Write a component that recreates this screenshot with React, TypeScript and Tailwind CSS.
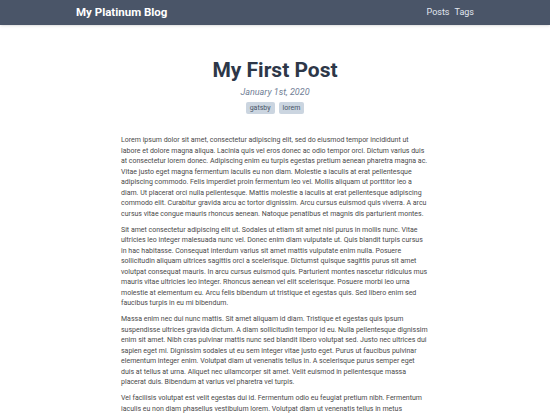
const paragraphs = [
  'Lorem ipsum dolor sit amet, consectetur adipiscing elit, sed do eiusmod tempor incididunt ut labore et dolore magna aliqua. Lacinia quis vel eros donec ac odio tempor orci. Dictum varius duis at consectetur lorem donec. Adipiscing enim eu turpis egestas pretium aenean pharetra magna ac. Vitae justo eget magna fermentum iaculis eu non diam. Molestie a iaculis at erat pellentesque adipiscing commodo. Felis imperdiet proin fermentum leo vel. Mollis aliquam ut porttitor leo a diam. Ut placerat orci nulla pellentesque. Mattis molestie a iaculis at erat pellentesque adipiscing commodo elit. Curabitur gravida arcu ac tortor dignissim. Arcu cursus euismod quis viverra. A arcu cursus vitae congue mauris rhoncus aenean. Natoque penatibus et magnis dis parturient montes.',
  'Sit amet consectetur adipiscing elit ut. Sodales ut etiam sit amet nisl purus in mollis nunc. Vitae ultricies leo integer malesuada nunc vel. Donec enim diam vulputate ut. Quis blandit turpis cursus in hac habitasse. Consequat interdum varius sit amet mattis vulputate enim nulla. Posuere sollicitudin aliquam ultrices sagittis orci a scelerisque. Dictumst quisque sagittis purus sit amet volutpat consequat mauris. In arcu cursus euismod quis. Parturient montes nascetur ridiculus mus mauris vitae ultricies leo integer. Rhoncus aenean vel elit scelerisque. Posuere morbi leo urna molestie at elementum eu. Arcu felis bibendum ut tristique et egestas quis. Sed libero enim sed faucibus turpis in eu mi bibendum.',
  'Massa enim nec dui nunc mattis. Sit amet aliquam id diam. Tristique et egestas quis ipsum suspendisse ultrices gravida dictum. A diam sollicitudin tempor id eu. Nulla pellentesque dignissim enim sit amet. Nibh cras pulvinar mattis nunc sed blandit libero volutpat sed. Justo nec ultrices dui sapien eget mi. Dignissim sodales ut eu sem integer vitae justo eget. Purus ut faucibus pulvinar elementum integer enim. Volutpat diam ut venenatis tellus in. A scelerisque purus semper eget duis at tellus at urna. Aliquet nec ullamcorper sit amet. Velit euismod in pellentesque massa placerat duis. Bibendum at varius vel pharetra vel turpis.',
  'Vel facilisis volutpat est velit egestas dui id. Fermentum odio eu feugiat pretium nibh. Fermentum iaculis eu non diam phasellus vestibulum lorem. Volutpat diam ut venenatis tellus in metus vulputate eu scelerisque. Felis donec et odio pellentesque diam volutpat commodo sed egestas. Aliquam sem fringilla ut morbi tincidunt augue interdum velit euismod.',
]

export default function App() {
  return (
    <div className="h-screen overflow-hidden bg-white font-['Roboto',sans-serif]">
      <header className="bg-[#4a5568] shadow-sm">
        <div className="px-[76px] h-[25px] flex items-center justify-between">
          <span className="text-white font-bold text-[11.5px]">My Platinum Blog</span>
          <nav className="flex gap-[5px] text-[9px] text-[#e2e8f0]">
            <a href="#">Posts</a>
            <a href="#">Tags</a>
          </nav>
        </div>
      </header>

      <main className="w-[308px] mx-auto pt-[35px]">
        <h1 className="text-center font-bold text-[21px] leading-none text-[#2d3748]">My First Post</h1>
        <p className="text-center italic text-[9px] text-[#718096] mt-[5px]">January 1st, 2020</p>
        <div className="flex justify-center gap-[4px] mt-[2px]">
          <span className="bg-[#cbd5e0] text-[#4a5568] text-[7px] px-[4px] py-[1px] rounded-[2px]">gatsby</span>
          <span className="bg-[#cbd5e0] text-[#4a5568] text-[7px] px-[4px] py-[1px] rounded-[2px]">lorem</span>
        </div>

        <div className="mt-[21px] flex flex-col gap-[5.5px]">
          {paragraphs.map((p, i) => (
            <p key={i} className="text-[7px] leading-[10.5px] text-[#4a4a4a]">{p}</p>
          ))}
        </div>
      </main>
    </div>
  )
}
